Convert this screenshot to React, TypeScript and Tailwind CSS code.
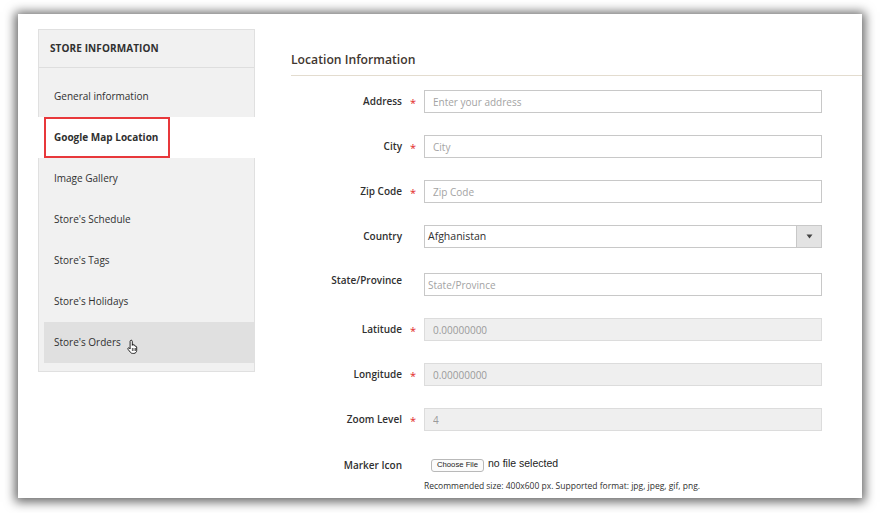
import React from "react";

const navItems = [
  "Image Gallery",
  "Store's Schedule",
  "Store's Tags",
  "Store's Holidays",
];

function HandCursor() {
  return (
    <svg width="13" height="15" viewBox="0 0 13 15" className="absolute left-[83px] top-[17px]">
      <path
        d="M4.2 1.2c.7 0 1.1.5 1.1 1.1v4.1l.2-1c.6-.3 1.3 0 1.4.6v.5c.5-.4 1.3-.2 1.4.5v.4c.5-.3 1.3-.1 1.4.6v3.4c0 1.7-1.2 3-2.9 3H5.6c-1 0-1.7-.4-2.3-1.2L1 10.3c-.4-.6-.2-1.2.3-1.4.5-.2 1 0 1.3.4l.5.7V2.3c0-.6.5-1.1 1.1-1.1z"
        fill="#fff"
        stroke="#111"
        strokeWidth="0.9"
        strokeLinejoin="round"
      />
      <path d="M5.4 9v3M7 9v3M8.6 9v3" stroke="#111" strokeWidth="0.7" />
    </svg>
  );
}

function Field({
  label,
  required,
  placeholder,
  value,
  disabled,
  className = "",
}: {
  label: string;
  required?: boolean;
  placeholder?: string;
  value?: string;
  disabled?: boolean;
  className?: string;
}) {
  return (
    <div className={`flex items-center h-[23px] ${className}`}>
      <label className="w-[111px] text-right text-[10px] font-semibold text-[#303030]">
        {label}
      </label>
      <span className="w-[22px] text-center text-[11px] text-[#e22626] leading-none pt-[2px]">
        {required ? "*" : ""}
      </span>
      <input
        readOnly
        disabled={disabled}
        placeholder={placeholder}
        value={value ?? ""}
        className={`w-[398px] h-[23px] border px-[8px] text-[10px] outline-none placeholder-[#a3a3a3] ${
          disabled
            ? "bg-[#efefef] border-[#dcdcdc] text-[#9a9a9a]"
            : "bg-white border-[#c8c8c8] text-[#303030]"
        }`}
      />
    </div>
  );
}

export default function App() {
  return (
    <div
      className="w-[880px] h-[513px] bg-white overflow-hidden"
      style={{ fontFamily: '"Open Sans", "Liberation Sans", sans-serif' }}
    >
      <div className="ml-[18px] mt-[14px] w-[844px] h-[484px] bg-white overflow-hidden shadow-[0_1px_10px_3px_rgba(0,0,0,0.6)] flex pt-[15px] pl-[20px]">
        {/* Sidebar */}
        <div className="w-[217px] h-[343px] shrink-0 bg-[#f1f1f1] border border-[#e0e0e0] flex flex-col">
          <div className="h-[39px] flex items-center pl-[11px] border-b border-[#dedede] text-[10px] font-bold text-[#303030] tracking-[0.1px]">
            STORE INFORMATION
          </div>
          <div className="pt-[8px] pb-[8px]">
            <div className="ml-[5px] h-[41px] flex items-center pl-[10px] text-[10px] text-[#303030]">
              General information
            </div>
            <div className="relative -ml-[1px] -mr-[1px] h-[41px] bg-white flex items-center pl-[16px] text-[10px] font-bold text-[#303030]">
              Google Map Location
              <div className="absolute left-[6px] top-0 w-[126px] h-[41px] border-2 border-[#e8383b]" />
            </div>
            {navItems.map((item) => (
              <div
                key={item}
                className="ml-[5px] h-[41px] flex items-center pl-[10px] text-[10px] text-[#303030]"
              >
                {item}
              </div>
            ))}
            <div className="relative ml-[5px] h-[41px] bg-[#e0e0e0] flex items-center pl-[10px] text-[10px] text-[#303030]">
              Store's Orders
              <HandCursor />
            </div>
          </div>
        </div>

        {/* Main */}
        <div className="flex-1 ml-[36px] pt-[21px]">
          <div className="h-[26px] border-b border-[#e3dccf] text-[12.2px] font-semibold text-[#41362f] leading-[20px]">
            Location Information
          </div>
          <div className="pt-[14px] flex flex-col">
            <Field label="Address" required placeholder="Enter your address" />
            <Field label="City" required placeholder="City" className="mt-[22px]" />
            <Field label="Zip Code" required placeholder="Zip Code" className="mt-[22px]" />

            {/* Country */}
            <div className="flex items-center h-[23px] mt-[22px]">
              <label className="w-[111px] text-right text-[10px] font-semibold text-[#303030]">
                Country
              </label>
              <span className="w-[22px]" />
              <div className="w-[398px] h-[23px] border border-[#c8c8c8] flex">
                <div className="flex-1 flex items-center pl-[3px] text-[10.5px] text-[#303030]">
                  Afghanistan
                </div>
                <div className="w-[25px] h-full bg-[#e3e3e3] border-l border-[#c8c8c8] flex items-center justify-center">
                  <svg width="7" height="5" viewBox="0 0 7 5">
                    <path d="M0.5 0.5h6L3.5 4.5z" fill="#444" />
                  </svg>
                </div>
              </div>
            </div>

            {/* State */}
            <div className="flex items-start h-[23px] mt-[25px]">
              <label className="w-[111px] text-right text-[10px] font-semibold text-[#303030] leading-[14px]">
                State/Province
              </label>
              <span className="w-[22px]" />
              <input
                readOnly
                placeholder="State/Province"
                className="w-[398px] h-[23px] border border-[#c8c8c8] bg-white px-[3px] text-[10px] outline-none placeholder-[#a3a3a3]"
              />
            </div>

            <Field label="Latitude" required disabled value="0.00000000" className="mt-[22px]" />
            <Field label="Longitude" required disabled value="0.00000000" className="mt-[22px]" />
            <Field label="Zoom Level" required disabled value="4" className="mt-[22px]" />

            {/* Marker Icon */}
            <div className="flex items-center h-[16px] mt-[26px]">
              <label className="w-[111px] text-right text-[10px] font-semibold text-[#303030]">
                Marker Icon
              </label>
              <span className="w-[22px]" />
              <div className="flex items-center pl-[7px]">
                <button
                  className="h-[13px] px-[5px] border border-[#b9b9b9] rounded-[3px] bg-[#fbfbfb] text-[7.7px] leading-none text-[#222]"
                  style={{ fontFamily: '"Liberation Sans", Arial, sans-serif' }}
                >
                  Choose File
                </button>
                <span
                  className="ml-[4px] text-[10.5px] text-[#222] -mt-[2px]"
                  style={{ fontFamily: '"Liberation Sans", Arial, sans-serif' }}
                >
                  no file selected
                </span>
              </div>
            </div>
            <div className="ml-[133px] mt-[7px] text-[8.5px] leading-[12px] text-[#303030]">
              Recommended size: 400x600 px. Supported format: jpg, jpeg, gif, png.
            </div>
          </div>
        </div>
      </div>
    </div>
  );
}
